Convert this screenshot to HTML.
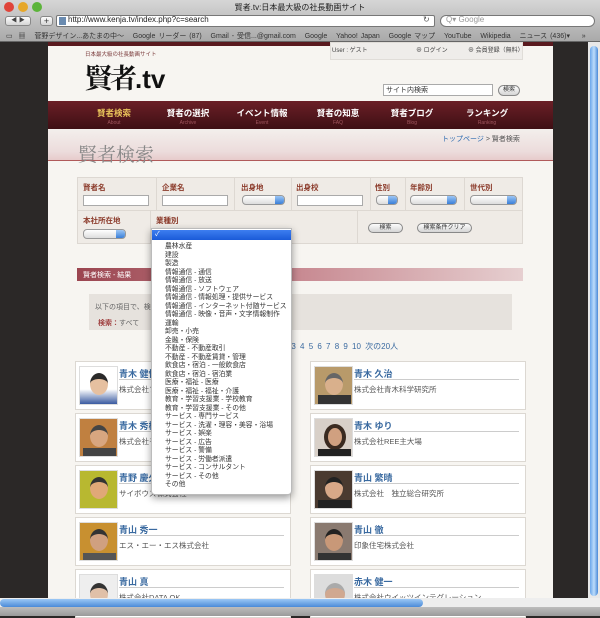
<!DOCTYPE html>
<html><head><meta charset="utf-8">
<style>
*{margin:0;padding:0;box-sizing:border-box}
body{width:600px;height:616px;overflow:hidden;position:relative;background:#2b2827;font-family:"Liberation Sans","Noto Sans CJK JP",sans-serif;font-size:8px;color:#555}
.a{position:absolute}
.t{white-space:nowrap}
#chrome{left:0;top:0;width:600px;height:42px;background:linear-gradient(#d6d6d6,#a9a9a9);border-bottom:1px solid #666}
.dot{width:10px;height:10px;border-radius:50%;top:2px}
.btn{background:linear-gradient(#fdfdfd,#d5d5d5);border:1px solid #888;border-radius:3px}
#page{left:48px;top:42px;width:505px;height:560px;background:#f7f5f1}
.lab{color:#8b3a2a;font-weight:bold;font-size:7.5px}
.inp{background:#fff;border:1px solid #aaa;height:11px}
.sel{border:1px solid #999;border-radius:4px;height:10px;background:linear-gradient(#fff,#ddd)}
.sel:after{content:"";position:absolute;right:0;top:0;width:9px;height:8px;background:linear-gradient(#9cc6f5,#3a7fd8);border-radius:0 3px 3px 0}
.card{background:#fff;border:1px solid #dcd8d2;width:216px;height:49px}
.ph{left:3px;top:4px;width:39px;height:39px;border:1px solid #ddd;overflow:hidden}
.nm{left:43px;top:5px;font-weight:bold;color:#3a6aa0;font-size:9px}
.ul{left:43px;top:17px;width:165px;height:1px;background:#ccc}
.co{left:43px;top:22px;font-size:7.5px;color:#555}
.nav{color:#fff;font-size:8.5px;font-weight:bold;text-align:center;width:72px;top:6px}
.nav small{display:block;font-size:5px;color:#a0565e;font-weight:normal;margin-top:1px}
#dd div{height:8.52px;line-height:8.52px;font-size:6.8px;padding-left:13px;color:#333;white-space:nowrap}
</style></head><body>
<div id="chrome" class="a">
 <div class="a dot" style="left:4px;background:#e0443a"></div>
 <div class="a dot" style="left:18px;background:#e6a72a"></div>
 <div class="a dot" style="left:32px;background:#5cb43a"></div>
 <div class="a t" style="left:0;width:600px;text-align:center;top:2px;font-size:8px;color:#222">賢者.tv:日本最大級の社長動画サイト</div>
 <div class="a btn" style="left:5px;top:16px;width:26px;height:10px;font-size:6px;color:#444;text-align:center;line-height:8px">◀ ▶</div>
 <div class="a btn" style="left:40px;top:16px;width:13px;height:10px;font-size:9px;line-height:8px;text-align:center;color:#333">+</div>
 <div class="a" style="left:56px;top:15px;width:379px;height:12px;background:#fff;border:1px solid #777;border-radius:2px"></div>
 <div class="a" style="left:59px;top:17px;width:7px;height:8px;background:#6a8bb0"></div>
 <div class="a t" style="left:68px;top:15px;font-size:8px;color:#222">http://www.kenja.tv/index.php?c=search</div>
 <div class="a t" style="left:423px;top:15px;font-size:8px;color:#555">↻</div>
 <div class="a" style="left:440px;top:15px;width:155px;height:12px;background:#fff;border:1px solid #777;border-radius:7px"></div>
 <div class="a t" style="left:446px;top:15px;font-size:8px;color:#999">Q▾ Google</div>
 <div class="a t" style="left:6px;top:31px;font-size:7px;color:#333;word-spacing:1px">▭ &nbsp;▦ &nbsp;&nbsp;菅野デザイン...あたまの中〜 &nbsp;&nbsp;Google リーダー (87) &nbsp;&nbsp;Gmail - 受信...@gmail.com &nbsp;&nbsp;Google &nbsp;&nbsp;Yahoo! Japan &nbsp;&nbsp;Google マップ &nbsp;&nbsp;YouTube &nbsp;&nbsp;Wikipedia &nbsp;&nbsp;ニュース (436)▾ &nbsp;&nbsp;&nbsp;»</div>
</div>
<div class="a" style="left:588px;top:42px;width:12px;height:556px;background:#e8e8e8"></div>
<div class="a" style="left:590px;top:46px;width:8px;height:550px;border-radius:4px;background:linear-gradient(90deg,#6aa6ea,#bcdcfb,#4a8ad8)"></div>

<div id="page" class="a">
 <div class="a" style="left:0;top:0;width:505px;height:4px;background:#5a1a1f"></div>
 <div class="a" style="left:282px;top:0;width:193px;height:18px;background:#efedea;border:1px solid #e0ddd8"></div>
 <div class="a t" style="left:284px;top:3px;font-size:6px;color:#444">User : ゲスト</div>
 <div class="a t" style="left:368px;top:3px;font-size:6px;color:#444">⊕ ログイン</div>
 <div class="a t" style="left:420px;top:3px;font-size:6px;color:#444">⊕ 会員登録（無料）</div>
 <div class="a t" style="left:37px;top:8px;font-size:5.5px;color:#7a3a3a">日本最大級の社長動画サイト</div>
 <div class="a t" style="left:37px;top:18px;font-size:27px;font-weight:bold;color:#111;font-family:'Noto Serif CJK SC',serif;letter-spacing:-2px;line-height:34px">賢者<span style="font-family:'Liberation Sans';letter-spacing:0;font-size:26px">.tv</span></div>
 <div class="a" style="left:335px;top:42px;width:110px;height:12px;background:#fff;border:1px solid #aaa"></div>
 <div class="a t" style="left:338px;top:43px;font-size:7px;color:#333">サイト内検索</div>
 <div class="a btn" style="left:450px;top:43px;width:22px;height:11px;border-radius:6px;font-size:6px;text-align:center;line-height:9px;color:#333">検索</div>
 <div class="a" style="left:0;top:59px;width:505px;height:28px;background:linear-gradient(#6b1f27,#3e0f14)"></div>
 <div class="a nav" style="left:30px;top:65px;color:#e8c25a">賢者検索<small>About</small></div>
 <div class="a nav" style="left:104px;top:65px">賢者の選択<small>Archive</small></div>
 <div class="a nav" style="left:178px;top:65px">イベント情報<small>Event</small></div>
 <div class="a nav" style="left:254px;top:65px">賢者の知恵<small>FAQ</small></div>
 <div class="a nav" style="left:328px;top:65px">賢者ブログ<small>Blog</small></div>
 <div class="a nav" style="left:403px;top:65px">ランキング<small>Ranking</small></div>
 <div class="a" style="left:0;top:87px;width:505px;height:32px;background:linear-gradient(#f3efec,#ecdcdc 70%,#e6c9c9)"></div>
 <div class="a" style="left:0;top:118px;width:505px;height:1px;background:#b05a5a"></div>
 <div class="a t" style="left:30px;top:98px;font-size:19px;color:#888;font-family:'Noto Serif CJK SC',serif">賢者検索</div>
 <div class="a t" style="left:394px;top:92px;font-size:7px;color:#555"><span style="color:#2a6ab0">トップページ</span> &gt; 賢者検索</div>
 <div class="a" style="left:29px;top:135px;width:446px;height:67px;background:#efebe6;border:1px solid #ddd8d2"></div>
 <div class="a" style="left:29px;top:168px;width:446px;height:1px;background:#ddd8d2"></div>
 <div class="a" style="left:108px;top:135px;width:1px;height:33px;background:#ddd8d2"></div>
 <div class="a" style="left:186px;top:135px;width:1px;height:33px;background:#ddd8d2"></div>
 <div class="a" style="left:243px;top:135px;width:1px;height:33px;background:#ddd8d2"></div>
 <div class="a" style="left:322px;top:135px;width:1px;height:33px;background:#ddd8d2"></div>
 <div class="a" style="left:357px;top:135px;width:1px;height:33px;background:#ddd8d2"></div>
 <div class="a" style="left:416px;top:135px;width:1px;height:33px;background:#ddd8d2"></div>
 <div class="a" style="left:102px;top:168px;width:1px;height:34px;background:#ddd8d2"></div>
 <div class="a" style="left:309px;top:168px;width:1px;height:34px;background:#ddd8d2"></div>
 <div class="a lab t" style="left:35px;top:140px">賢者名</div>
 <div class="a lab t" style="left:114px;top:140px">企業名</div>
 <div class="a lab t" style="left:193px;top:140px">出身地</div>
 <div class="a lab t" style="left:248px;top:140px">出身校</div>
 <div class="a lab t" style="left:327px;top:140px">性別</div>
 <div class="a lab t" style="left:362px;top:140px">年齢別</div>
 <div class="a lab t" style="left:422px;top:140px">世代別</div>
 <div class="a inp" style="left:35px;top:153px;width:66px"></div>
 <div class="a inp" style="left:114px;top:153px;width:66px"></div>
 <div class="a sel" style="left:194px;top:153px;width:43px"></div>
 <div class="a inp" style="left:249px;top:153px;width:66px"></div>
 <div class="a sel" style="left:328px;top:153px;width:22px"></div>
 <div class="a sel" style="left:362px;top:153px;width:47px"></div>
 <div class="a sel" style="left:422px;top:153px;width:47px"></div>
 <div class="a lab t" style="left:35px;top:173px">本社所在地</div>
 <div class="a lab t" style="left:108px;top:173px">業種別</div>
 <div class="a sel" style="left:35px;top:187px;width:43px"></div>
 <div class="a btn" style="left:320px;top:181px;width:35px;height:10px;border-radius:6px;font-size:6px;text-align:center;line-height:8px;color:#333">検索</div>
 <div class="a btn" style="left:369px;top:181px;width:55px;height:10px;border-radius:6px;font-size:6px;text-align:center;line-height:8px;color:#333">検索条件クリア</div>
 <div class="a" style="left:29px;top:226px;width:446px;height:13px;background:linear-gradient(90deg,#9b4550,#c88a92 50%,#e6cfd0)"></div>
 <div class="a t" style="left:35px;top:228px;font-size:7px;color:#fff">賢者検索 - 結果</div>
 <div class="a" style="left:41px;top:252px;width:423px;height:36px;background:#e6e2dd"></div>
 <div class="a t" style="left:47px;top:260px;font-size:7px;color:#666">以下の項目で、検索しました。</div>
 <div class="a t" style="left:50px;top:276px;font-size:7px;color:#666"><b style="color:#a04040">検索：</b>すべて</div>
 <div class="a t" style="left:226px;top:299px;font-size:8px;color:#3a6aa0;word-spacing:2px">1 2 3 4 5 6 7 8 9 10 次の20人</div>
 <div class="a card" style="left:27px;top:319px"><div class="a ph" style="background:linear-gradient(#fff 60%,#3a5aa0)"><div class="a" style="left:10px;top:6px;width:18px;height:22px;border-radius:50%;background:#e6c0a0;border-top:6px solid #2a2a2a"></div></div><div class="a nm t">青木 健悟</div><div class="a ul"></div><div class="a co t">株式会社フォーシーズ</div></div>
 <div class="a card" style="left:262px;top:319px"><div class="a ph" style="background:#b89a6a"><div class="a" style="left:10px;top:6px;width:18px;height:22px;border-radius:50%;background:#d9b08c;border-top:5px solid #666"></div><div class="a" style="left:3px;top:28px;width:33px;height:12px;background:#333"></div></div><div class="a nm t">青木 久治</div><div class="a ul"></div><div class="a co t">株式会社青木科学研究所</div></div>
 <div class="a card" style="left:27px;top:371px"><div class="a ph" style="background:#c08040"><div class="a" style="left:10px;top:6px;width:18px;height:22px;border-radius:50%;background:#d8a680;border-top:5px solid #444"></div><div class="a" style="left:3px;top:29px;width:33px;height:11px;background:#444"></div></div><div class="a nm t">青木 秀樹</div><div class="a ul"></div><div class="a co t">株式会社モバイルファクトリー</div></div>
 <div class="a card" style="left:262px;top:371px"><div class="a ph" style="background:#d8d0c8"><div class="a" style="left:9px;top:5px;width:22px;height:26px;border-radius:50%;background:#d0a080;border:4px solid #3a2a20"></div><div class="a" style="left:3px;top:30px;width:33px;height:10px;background:#222"></div></div><div class="a nm t">青木 ゆり</div><div class="a ul"></div><div class="a co t">株式会社REE主大場</div></div>
 <div class="a card" style="left:27px;top:423px"><div class="a ph" style="background:#b8b830"><div class="a" style="left:10px;top:6px;width:18px;height:22px;border-radius:50%;background:#e0a878;border-top:5px solid #333"></div></div><div class="a nm t">青野 慶久</div><div class="a ul"></div><div class="a co t">サイボウズ株式会社</div></div>
 <div class="a card" style="left:262px;top:423px"><div class="a ph" style="background:#4a3a30"><div class="a" style="left:10px;top:6px;width:18px;height:22px;border-radius:50%;background:#d8a888;border-top:5px solid #222"></div><div class="a" style="left:3px;top:29px;width:33px;height:11px;background:#222"></div></div><div class="a nm t">青山 繁晴</div><div class="a ul"></div><div class="a co t">株式会社　独立総合研究所</div></div>
 <div class="a card" style="left:27px;top:475px"><div class="a ph" style="background:#c89030"><div class="a" style="left:10px;top:6px;width:18px;height:22px;border-radius:50%;background:#d0a080;border-top:5px solid #333"></div><div class="a" style="left:3px;top:30px;width:33px;height:10px;background:#555"></div></div><div class="a nm t">青山 秀一</div><div class="a ul"></div><div class="a co t">エス・エー・エス株式会社</div></div>
 <div class="a card" style="left:262px;top:475px"><div class="a ph" style="background:#8a7a70"><div class="a" style="left:10px;top:6px;width:18px;height:22px;border-radius:50%;background:#c89878;border-top:5px solid #222"></div><div class="a" style="left:3px;top:30px;width:33px;height:10px;background:#333"></div></div><div class="a nm t">青山 徹</div><div class="a ul"></div><div class="a co t">印象住宅株式会社</div></div>
 <div class="a card" style="left:27px;top:527px"><div class="a ph" style="background:#eee"><div class="a" style="left:10px;top:8px;width:18px;height:22px;border-radius:50%;background:#e0c0a8;border-top:5px solid #333"></div></div><div class="a nm t">青山 真</div><div class="a ul"></div><div class="a co t">株式会社DATA OK</div></div>
 <div class="a card" style="left:262px;top:527px"><div class="a ph" style="background:#ddd"><div class="a" style="left:10px;top:8px;width:20px;height:22px;border-radius:50%;background:#d0a890;border-top:5px solid #aaa"></div></div><div class="a nm t">赤木 健一</div><div class="a ul"></div><div class="a co t">株式会社ウイッツインテグレーション</div></div>
</div>

<div id="dd" class="a" style="left:151px;top:228px;width:141px;height:267px;background:#fff;border:1px solid #bbb;border-radius:0 0 4px 4px;box-shadow:0 3px 8px rgba(0,0,0,.4);padding-top:1px">
 <div style="background:linear-gradient(#3d7ef0,#1a5ad8);color:#fff;padding-left:3px;height:10px;line-height:10px;margin-bottom:3px">✓</div>
 <div>農林水産</div><div>建設</div><div>製造</div><div>情報通信 - 通信</div><div>情報通信 - 放送</div><div>情報通信 - ソフトウェア</div><div>情報通信 - 情報処理・提供サービス</div><div>情報通信 - インターネット付随サービス</div><div>情報通信 - 映像・音声・文字情報制作</div><div>運輸</div><div>卸売・小売</div><div>金融・保険</div><div>不動産 - 不動産取引</div><div>不動産 - 不動産賃貸・管理</div><div>飲食店・宿泊 - 一般飲食店</div><div>飲食店・宿泊 - 宿泊業</div><div>医療・福祉 - 医療</div><div>医療・福祉 - 福祉・介護</div><div>教育・学習支援業 - 学校教育</div><div>教育・学習支援業 - その他</div><div>サービス - 専門サービス</div><div>サービス - 洗濯・理容・美容・浴場</div><div>サービス - 娯楽</div><div>サービス - 広告</div><div>サービス - 警備</div><div>サービス - 労働者派遣</div><div>サービス - コンサルタント</div><div>サービス - その他</div><div>その他</div>
</div>

<div class="a" style="left:0;top:598px;width:600px;height:10px;background:#eee"></div>
<div class="a" style="left:0;top:599px;width:423px;height:8px;border-radius:4px;background:linear-gradient(#9cc8f5,#4a8ad8)"></div>
<div class="a" style="left:0;top:607px;width:600px;height:9px;background:linear-gradient(#bdbdbd,#9a9a9a)"></div>
</body></html>
